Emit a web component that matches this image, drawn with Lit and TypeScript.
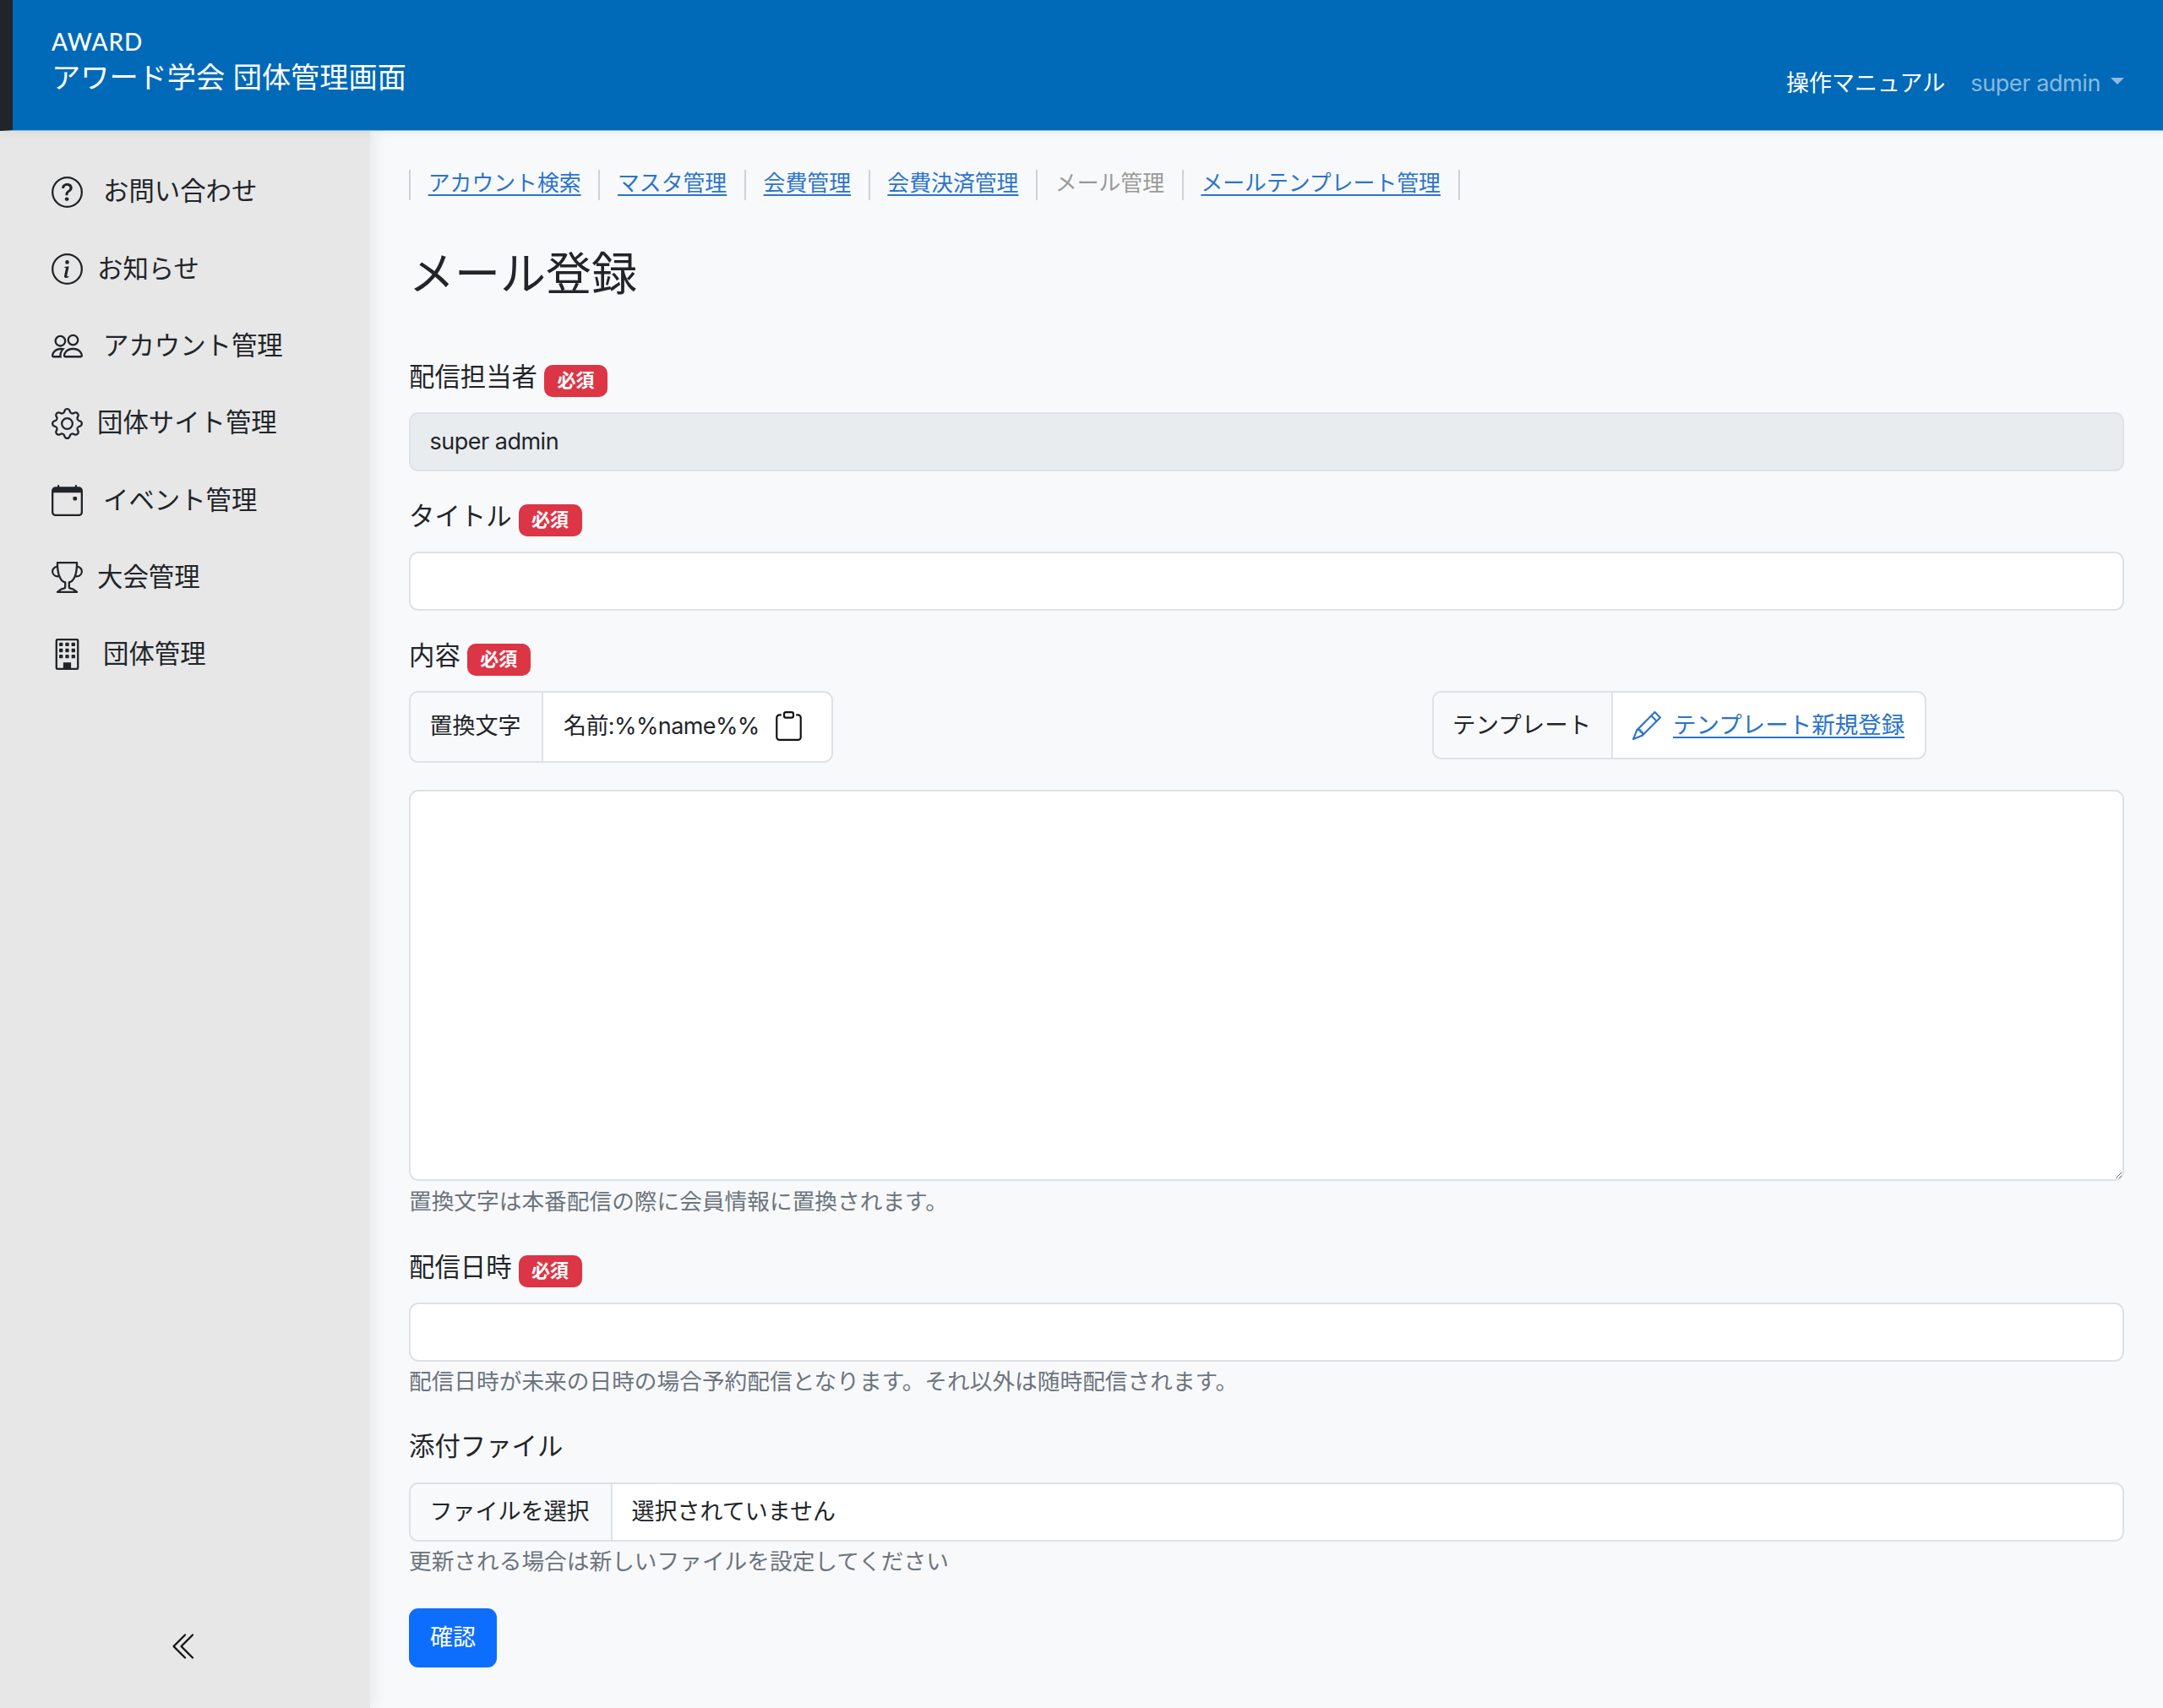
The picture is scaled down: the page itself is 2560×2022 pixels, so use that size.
import { LitElement, html, css, svg } from "lit";
import { customElement } from "lit/decorators.js";

const icons: Record<string, unknown> = {
  question: svg`<path d="M8 15A7 7 0 1 1 8 1a7 7 0 0 1 0 14zm0 1A8 8 0 1 0 8 0a8 8 0 0 0 0 16z"/><path d="M5.255 5.786a.237.237 0 0 0 .241.247h.825c.138 0 .248-.113.266-.25.09-.656.54-1.134 1.342-1.134.686 0 1.314.343 1.314 1.168 0 .635-.374.927-.965 1.371-.673.489-1.206 1.06-1.168 1.987l.003.217a.25.25 0 0 0 .25.246h.811a.25.25 0 0 0 .25-.25v-.105c0-.718.273-.927 1.01-1.486.609-.463 1.244-.977 1.244-2.056 0-1.511-1.276-2.241-2.673-2.241-1.267 0-2.655.59-2.75 2.286zm1.557 5.763c0 .533.425.927 1.01.927.609 0 1.028-.394 1.028-.927 0-.552-.42-.94-1.029-.94-.584 0-1.009.388-1.009.94z"/>`,
  info: svg`<path d="M8 15A7 7 0 1 1 8 1a7 7 0 0 1 0 14zm0 1A8 8 0 1 0 8 0a8 8 0 0 0 0 16z"/><path d="m8.93 6.588-2.29.287-.082.38.45.083c.294.07.352.176.288.469l-.738 3.468c-.194.897.105 1.319.808 1.319.545 0 1.178-.252 1.465-.598l.088-.416c-.2.176-.492.246-.686.246-.275 0-.375-.193-.304-.533L8.93 6.588zM9 4.5a1 1 0 1 1-2 0 1 1 0 0 1 2 0z"/>`,
  people: svg`<path d="M15 14s1 0 1-1-1-4-5-4-5 3-5 4 1 1 1 1h8Zm-7.978-1A.261.261 0 0 1 7 12.996c.001-.264.167-1.03.76-1.72C8.312 10.629 9.282 10 11 10c1.717 0 2.687.63 3.24 1.276.593.69.758 1.457.76 1.72l-.008.002a.274.274 0 0 1-.014.002H7.022ZM11 7a2 2 0 1 0 0-4 2 2 0 0 0 0 4Zm3-2a3 3 0 1 1-6 0 3 3 0 0 1 6 0ZM6.936 9.28a5.88 5.88 0 0 0-1.23-.247A7.35 7.35 0 0 0 5 9c-4 0-5 3-5 4 0 .667.333 1 1 1h4.216A2.238 2.238 0 0 1 5 13c0-1.01.377-2.042 1.09-2.904.243-.294.526-.569.846-.816ZM4.92 10A5.493 5.493 0 0 0 4 13H1c0-.26.164-1.03.76-1.724.545-.636 1.492-1.256 3.16-1.275ZM1.5 5.5a3 3 0 1 1 6 0 3 3 0 0 1-6 0Zm3-2a2 2 0 1 0 0 4 2 2 0 0 0 0-4Z"/>`,
  gear: svg`<path d="M8 4.754a3.246 3.246 0 1 0 0 6.492 3.246 3.246 0 0 0 0-6.492zM5.754 8a2.246 2.246 0 1 1 4.492 0 2.246 2.246 0 0 1-4.492 0z"/><path d="M9.796 1.343c-.527-1.79-3.065-1.79-3.592 0l-.094.319a.873.873 0 0 1-1.255.52l-.292-.16c-1.64-.892-3.433.902-2.54 2.541l.159.292a.873.873 0 0 1-.52 1.255l-.319.094c-1.79.527-1.79 3.065 0 3.592l.319.094a.873.873 0 0 1 .52 1.255l-.16.292c-.892 1.64.901 3.434 2.541 2.54l.292-.159a.873.873 0 0 1 1.255.52l.094.319c.527 1.79 3.065 1.79 3.592 0l.094-.319a.873.873 0 0 1 1.255-.52l.292.16c1.64.893 3.434-.902 2.54-2.541l-.159-.292a.873.873 0 0 1 .52-1.255l.319-.094c1.79-.527 1.79-3.065 0-3.592l-.319-.094a.873.873 0 0 1-.52-1.255l.16-.292c.893-1.64-.902-3.433-2.541-2.54l-.292.159a.873.873 0 0 1-1.255-.52l-.094-.319zm-2.633.283c.246-.835 1.428-.835 1.674 0l.094.319a1.873 1.873 0 0 0 2.693 1.115l.291-.16c.764-.415 1.6.42 1.184 1.185l-.159.292a1.873 1.873 0 0 0 1.116 2.692l.318.094c.835.246.835 1.428 0 1.674l-.319.094a1.873 1.873 0 0 0-1.115 2.693l.16.291c.415.764-.42 1.6-1.185 1.184l-.291-.159a1.873 1.873 0 0 0-2.693 1.116l-.094.318c-.246.835-1.428.835-1.674 0l-.094-.319a1.873 1.873 0 0 0-2.692-1.115l-.292.16c-.764.415-1.6-.42-1.184-1.185l.159-.291A1.873 1.873 0 0 0 1.945 8.93l-.319-.094c-.835-.246-.835-1.428 0-1.674l.319-.094A1.873 1.873 0 0 0 3.06 4.377l-.16-.292c-.415-.764.42-1.6 1.185-1.184l.292.159a1.873 1.873 0 0 0 2.692-1.115l.094-.319z"/>`,
  calendar: svg`<path d="M11 6.5a.5.5 0 0 1 .5-.5h1a.5.5 0 0 1 .5.5v1a.5.5 0 0 1-.5.5h-1a.5.5 0 0 1-.5-.5v-1z"/><path d="M3.5 0a.5.5 0 0 1 .5.5V1h8V.5a.5.5 0 0 1 1 0V1h1a2 2 0 0 1 2 2v11a2 2 0 0 1-2 2H2a2 2 0 0 1-2-2V3a2 2 0 0 1 2-2h1V.5a.5.5 0 0 1 .5-.5zM1 4v10a1 1 0 0 0 1 1h12a1 1 0 0 0 1-1V4H1z"/>`,
  trophy: svg`<path d="M2.5.5A.5.5 0 0 1 3 0h10a.5.5 0 0 1 .5.5c0 .538-.012 1.05-.034 1.536a3 3 0 1 1-1.133 5.89c-.79 1.865-1.878 2.777-2.833 3.011v2.173l1.425.356c.194.048.377.135.537.255L13.3 15.1a.5.5 0 0 1-.3.9H3a.5.5 0 0 1-.3-.9l1.838-1.379c.16-.12.343-.207.537-.255L6.5 13.11v-2.173c-.955-.234-2.043-1.146-2.833-3.012a3 3 0 1 1-1.132-5.89A33.076 33.076 0 0 1 2.5.5zm.099 2.54a2 2 0 0 0 .72 3.935c-.333-1.05-.588-2.346-.72-3.935zm10.083 3.935a2 2 0 0 0 .72-3.935c-.133 1.59-.388 2.885-.72 3.935zM3.504 1c.007.517.026 1.006.056 1.469.13 2.028.457 3.546.87 4.667C5.294 9.48 6.484 10 7 10a.5.5 0 0 1 .5.5v2.61a1 1 0 0 1-.757.97l-1.426.356a.5.5 0 0 0-.179.085L4.5 15h7l-.638-.479a.501.501 0 0 0-.18-.085l-1.425-.356a1 1 0 0 1-.757-.97V10.5A.5.5 0 0 1 9 10c.516 0 1.706-.52 2.57-2.864.413-1.12.74-2.64.87-4.667.03-.463.049-.952.056-1.469H3.504z"/>`,
  building: svg`<path fill-rule="evenodd" d="M3 0h10a1 1 0 0 1 1 1v14a1 1 0 0 1-1 1H3a1 1 0 0 1-1-1V1a1 1 0 0 1 1-1zm.2 1a.2.2 0 0 0-.2.2v13.6c0 .1.1.2.2.2h9.6a.2.2 0 0 0 .2-.2V1.2a.2.2 0 0 0-.2-.2H3.200z"/><rect x="6" y="12.200" width="4" height="3.500"/><rect x="3.900" y="2" width="1.900" height="1.900" rx=".4"/><rect x="7.050" y="2" width="1.900" height="1.900" rx=".4"/><rect x="10.200" y="2" width="1.900" height="1.900" rx=".4"/><rect x="3.900" y="5.100" width="1.900" height="1.900" rx=".4"/><rect x="7.050" y="5.100" width="1.900" height="1.900" rx=".4"/><rect x="10.200" y="5.100" width="1.900" height="1.900" rx=".4"/><rect x="3.900" y="8.200" width="1.900" height="1.900" rx=".4"/><rect x="7.050" y="8.200" width="1.900" height="1.900" rx=".4"/><rect x="10.200" y="8.200" width="1.900" height="1.900" rx=".4"/>`,
  clipboard: svg`<path d="M4 1.5H3a2 2 0 0 0-2 2V14a2 2 0 0 0 2 2h10a2 2 0 0 0 2-2V3.5a2 2 0 0 0-2-2h-1v1h1a1 1 0 0 1 1 1V14a1 1 0 0 1-1 1H3a1 1 0 0 1-1-1V3.5a1 1 0 0 1 1-1h1v-1z"/><path d="M9.5 1a.5.5 0 0 1 .5.5v1a.5.5 0 0 1-.5.5h-3a.5.5 0 0 1-.5-.5v-1a.5.5 0 0 1 .5-.5h3zm-3-1A1.5 1.5 0 0 0 5 1.5v1A1.5 1.5 0 0 0 6.5 4h3A1.5 1.5 0 0 0 11 2.5v-1A1.5 1.5 0 0 0 9.5 0h-3z"/>`,
  pencil: svg`<path d="M12.146.146a.5.5 0 0 1 .708 0l3 3a.5.5 0 0 1 0 .708l-10 10a.5.5 0 0 1-.168.11l-5 2a.5.5 0 0 1-.65-.65l2-5a.5.5 0 0 1 .11-.168l10-10zM11.207 2.5 13.5 4.793 14.793 3.5 12.5 1.207 11.207 2.5zm1.586 3L10.5 3.207 4 9.707V10h.5a.5.5 0 0 1 .5.5v.5h.5a.5.5 0 0 1 .5.5v.5h.293l6.5-6.5zm-9.761 5.175-.106.106-1.528 3.821 3.821-1.528.106-.106A.5.5 0 0 1 5 12.5V12h-.5a.5.5 0 0 1-.5-.5V11h-.5a.5.5 0 0 1-.468-.325z"/>`,
  chevrons: svg`<path fill-rule="evenodd" d="M8.354 1.646a.5.5 0 0 1 0 .708L2.707 8l5.647 5.646a.5.5 0 0 1-.708.708l-6-6a.5.5 0 0 1 0-.708l6-6a.5.5 0 0 1 .708 0z"/><path fill-rule="evenodd" d="M12.354 1.646a.5.5 0 0 1 0 .708L6.707 8l5.647 5.646a.5.5 0 0 1-.708.708l-6-6a.5.5 0 0 1 0-.708l6-6a.5.5 0 0 1 .708 0z"/>`,
};

const icon = (name: string, cls = "") =>
  html`<svg class="icon ${cls}" viewBox="0 0 16 16" fill="currentColor" aria-hidden="true">${icons[name]}</svg>`;

const sideItems = [
  ["question", "お問い合わせ", "wide"],
  ["info", "お知らせ", ""],
  ["people", "アカウント管理", "wide"],
  ["gear", "団体サイト管理", ""],
  ["calendar", "イベント管理", "wide"],
  ["trophy", "大会管理", ""],
  ["building", "団体管理", "wide"],
];

const tabs = [
  ["アカウント検索", true],
  ["マスタ管理", true],
  ["会費管理", true],
  ["会費決済管理", true],
  ["メール管理", false],
  ["メールテンプレート管理", true],
];

@customElement("app-root")
export class AppRoot extends LitElement {
  static styles = css`
    :host {
      display: block;
      width: 2560px;
      height: 2022px;
      background: #f8f9fb;
      color: #212529;
      font-family: Inter, "Noto Sans CJK JP", sans-serif;
      font-size: 27px;
      line-height: 1.5;
      overflow: hidden;
    }
    * { box-sizing: border-box; }
    .icon { display: block; flex: none; width: 37px; height: 37px; }

    header {
      position: relative;
      z-index: 2;
      height: 155px;
      background: #0069b8;
      border-left: 15px solid #212529;
      border-bottom: 1px solid #7fb9ea;
      box-shadow: 0 2px 10px rgba(0, 0, 0, 0.06);
      display: flex;
      justify-content: space-between;
      padding: 32px 46px 0 46px;
      color: #fff;
    }
    .brand { display: flex; flex-direction: column; }
    .logo { font-family: Lato, sans-serif; font-size: 28px; line-height: 34px; font-weight: 500; letter-spacing: 0.9px; }
    .app-title { font-size: 34.2px; line-height: 50px; margin-top: 1px; }
    .top-right { display: flex; align-items: center; height: 132px; margin-top: -32px; padding-top: 67px; }
    .manual { color: #fff; font-size: 27px; }
    .user { display: flex; align-items: center; color: rgba(255, 255, 255, 0.55); margin-left: 30px; letter-spacing: -0.4px; }
    .caret {
      width: 0; height: 0; margin-left: 12px; margin-top: -8px;
      border-left: 8px solid transparent;
      border-right: 8px solid transparent;
      border-top: 8px solid rgba(255, 255, 255, 0.55);
    }

    .body { display: flex; height: 1867px; }
    aside {
      position: relative;
      z-index: 1;
      flex: none;
      width: 438px;
      background: #e7e7e7;
      box-shadow: 8px 0 14px rgba(0, 0, 0, 0.05);
      display: flex;
      flex-direction: column;
      padding: 26.5px 0 0 61px;
    }
    .side-item {
      height: 91.3px;
      display: flex;
      align-items: center;
      gap: 17px;
      font-size: 30.4px;
      color: #212529;
    }
    .side-item.wide { gap: 24px; }
    .collapse { margin-top: auto; margin-bottom: 55px; margin-left: 140px; color: #111; width: 36px; }
    .collapse .icon { width: 36px; height: 36px; }

    main { flex: 1; min-width: 0; padding: 46px 46px 0 46px; }
    .tabs { display: flex; height: 36px; list-style: none; margin: 0; padding: 0; }
    .tabs li {
      display: flex; align-items: center;
      padding: 0 20.7px 5px;
      border-left: 2px solid #cfd2d5;
      font-size: 25.85px;
      line-height: 31px;
      color: #999;
    }
    .tabs li:last-child { border-right: 2px solid #cfd2d5; }
    a { color: #2b74c9; text-decoration: underline; text-underline-offset: 4px; }

    h1 { font-size: 54px; line-height: 62px; font-weight: 400; margin: 57px 0 76px; }

    .label { display: flex; align-items: flex-start; height: 38px; font-size: 30.4px; line-height: 28px; gap: 8px; margin-bottom: 18px; }
    .label.plain { line-height: 36px; margin-bottom: 23px; }
    .badge {
      background: #dc3545; color: #fff; font-size: 22px; font-weight: 700; line-height: 36px;
      height: 38px; width: 75px; text-align: center; border-radius: 10px; flex: none;
    }
    .control {
      display: block; width: 100%; height: 70px;
      padding: 0 22.5px;
      background: #fff;
      border: 2px solid #dee2e6;
      border-radius: 11px;
      font: inherit;
      color: #212529;
      outline: none;
    }
    .control.readonly { background: #e9ecef; display: flex; align-items: center; letter-spacing: -0.5px; padding-top: 1px; }
    .group { margin-bottom: 39px; }
    .after-hint { margin-bottom: 44px; }
    .after-hint2 { margin-bottom: 39px; margin-top: 6px; }

    .tool-row { display: flex; justify-content: space-between; align-items: flex-start; height: 85px; margin-bottom: 32px; padding-right: 234px; white-space: nowrap; }
    .igroup {
      display: flex; align-items: stretch;
      border: 2px solid #dee2e6; border-radius: 11px; background: #fff; overflow: hidden;
    }
    .igroup .addon { display: flex; align-items: center; flex: none; background: #f8f9fb; border-right: 2px solid #dee2e6; padding: 0 22.5px; white-space: nowrap; }
    .igroup .value { display: flex; align-items: center; white-space: nowrap; }
    .replace { height: 85px; width: 502px; }
    .replace .addon { width: 157px; }
    .replace .value { padding: 0 24px; gap: 17px; letter-spacing: -0.6px; }
    .replace .icon { width: 35px; height: 35px; color: #111; margin-top: -2px; }
    .template { height: 81px; width: 585px; font-size: 27.5px; }
    .template .addon { width: 212px; padding: 0 22px; }
    .template .value { padding: 0 22px 0 23px; gap: 14px; color: #2b74c9; }
    .template .icon { width: 34px; height: 34px; }

    textarea.control { height: 463px; resize: vertical; padding: 11px 24px; }
    .hint { font-size: 26.7px; line-height: 39px; color: #6c757d; margin-top: 4px; white-space: nowrap; }
    .hint.first { margin-top: 5px; }

    .file { height: 70px; width: 100%; }
    .file .addon { width: 239px; }
    .file .value { padding: 0 22.5px; }

    button {
      display: block; margin-top: 36px; width: 104px; height: 70px;
      background: #0d6efd; color: #fff; border: none; border-radius: 11px;
      font: inherit; padding: 0;
    }
  `;

  render() {
    return html`
      <header>
        <div class="brand">
          <div class="logo">AWARD</div>
          <div class="app-title">アワード学会 団体管理画面</div>
        </div>
        <div class="top-right">
          <span class="manual">操作マニュアル</span>
          <span class="user">super admin<span class="caret"></span></span>
        </div>
      </header>
      <div class="body">
        <aside>
          ${sideItems.map(
            ([ic, label, cls]) => html`<div class="side-item ${cls}">${icon(ic)}<span>${label}</span></div>`
          )}
          <div class="collapse">${icon("chevrons")}</div>
        </aside>
        <main>
          <ul class="tabs">
            ${tabs.map(([t, on]) => html`<li>${on ? html`<a href="#">${t}</a>` : t}</li>`)}
          </ul>
          <h1>メール登録</h1>

          <div class="label">配信担当者<span class="badge">必須</span></div>
          <div class="group"><div class="control readonly">super admin</div></div>

          <div class="label">タイトル<span class="badge">必須</span></div>
          <div class="group"><input class="control" type="text" /></div>

          <div class="label">内容<span class="badge">必須</span></div>
          <div class="tool-row">
            <div class="igroup replace">
              <div class="addon">置換文字</div>
              <div class="value">名前:%%name%%${icon("clipboard")}</div>
            </div>
            <div class="igroup template">
              <div class="addon">テンプレート</div>
              <div class="value">${icon("pencil")}<a href="#">テンプレート新規登録</a></div>
            </div>
          </div>
          <textarea class="control"></textarea>
          <div class="hint first after-hint">置換文字は本番配信の際に会員情報に置換されます。</div>

          <div class="label">配信日時<span class="badge">必須</span></div>
          <input class="control" type="text" />
          <div class="hint after-hint2">配信日時が未来の日時の場合予約配信となります。それ以外は随時配信されます。</div>

          <div class="label plain">添付ファイル</div>
          <div class="igroup file">
            <div class="addon">ファイルを選択</div>
            <div class="value">選択されていません</div>
          </div>
          <div class="hint">更新される場合は新しいファイルを設定してください</div>
          <button type="button">確認</button>
        </main>
      </div>
    `;
  }
}
